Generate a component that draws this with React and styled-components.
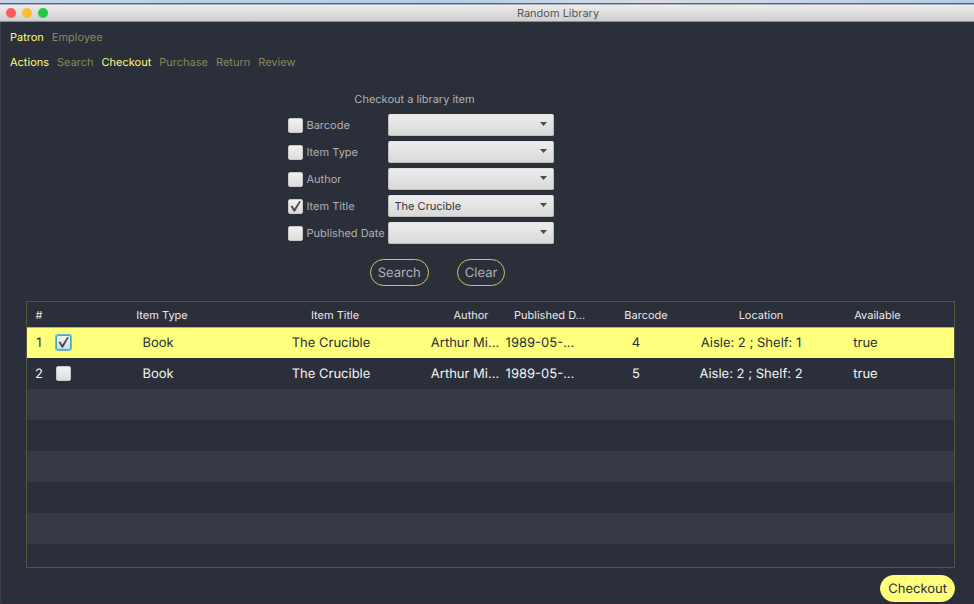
import React, { useState } from "react";
import styled, { createGlobalStyle } from "styled-components";

const GlobalStyle = createGlobalStyle`
  *, *::before, *::after { box-sizing: border-box; }
  body { margin: 0; background: #2b2f3a; text-rendering: geometricPrecision; }
  body, button, select, input { font-family: Inter, "Liberation Sans", sans-serif; }
  button, select { text-rendering: inherit; }
`;

const Window = styled.div`
  min-height: 100vh;
  display: flex;
  flex-direction: column;
  background: #2b2f3a;
  color: #b0b1b4;
  font-size: 11px;
  line-height: 14px;
  border-bottom: 1px solid #35283a;
`;

const Desktop = styled.div`
  height: 4px;
  background: linear-gradient(90deg, #c3d5e9, #b3cde9 45%, #d9dbe6 67%, #b3cbe9);
  border-bottom: 1px solid #566176;
`;

const TitleBar = styled.header`
  height: 18px;
  display: grid;
  grid-template-columns: 1fr auto 1fr;
  align-items: center;
  padding: 0 6px;
  background: linear-gradient(#ececec, #cfcfcf);
  border-top: 1px solid #aeb2ba;
  border-bottom: 1px solid #8c8d92;
`;

const WindowButtons = styled.div`
  display: flex;
  gap: 6px;
`;

const WindowButton = styled.button`
  width: 10px;
  height: 10px;
  padding: 0;
  border: 0;
  border-radius: 50%;
  background: ${(p) => p.$color};
`;

const WindowTitle = styled.h1`
  margin: 0;
  padding-left: 142px;
  font-size: 11px;
  line-height: 14px;
  font-weight: 400;
  color: #555;
`;

const Content = styled.main`
  flex: 1;
  display: flex;
  flex-direction: column;
  border-left: 1px solid #3c3f49;
`;

const Navigation = styled.div`
  display: flex;
  flex-direction: column;
  gap: 11px;
  padding: 8px 9px 0;
`;

const NavRow = styled.nav`
  display: flex;
  gap: 8px;
`;

const NavLink = styled.a`
  color: ${(p) => (p.$active ? "#fcfd7c" : "#848a59")};
  text-decoration: none;
`;

const SearchForm = styled.form`
  display: flex;
  flex-direction: column;
  align-items: center;
  padding: 23px 134px 0 0;
`;

const FormTitle = styled.h2`
  margin: 0 12px 8px 0;
  font-size: 11px;
  line-height: 14px;
  font-weight: 400;
`;

const Fields = styled.div`
  display: flex;
  flex-direction: column;
  gap: 5px;
`;

const FieldRow = styled.div`
  display: grid;
  grid-template-columns: 100px 166px;
  align-items: center;
`;

const FieldLabel = styled.label`
  display: flex;
  align-items: center;
  gap: 4px;
  white-space: nowrap;
`;

const CheckFrame = styled.span`
  position: relative;
  display: block;
  flex: none;
  width: 15px;
  height: 15px;
`;

const CheckInput = styled.input`
  appearance: none;
  display: block;
  width: 15px;
  height: 15px;
  margin: 0;
  border: 1px solid ${(p) => (p.$focused ? "#3ba9cc" : "#c9c9c9")};
  border-radius: 2px;
  background: linear-gradient(#f1f1f1, #dcdcdc);
  box-shadow: ${(p) => (p.$focused ? "0 0 0 1px #68c1dc" : "none")};
`;

const CheckMark = styled.svg`
  position: absolute;
  inset: 0;
  width: 15px;
  height: 15px;
  pointer-events: none;
`;

const SelectFrame = styled.div`
  position: relative;
`;

const Select = styled.select`
  appearance: none;
  display: block;
  width: 100%;
  height: 22px;
  padding: 0 24px 1px 6px;
  border: 1px solid #bdbdbd;
  border-top-color: #e4e4e4;
  border-radius: 2px;
  background: linear-gradient(#ededed, #d9d9d9);
  color: #333;
  font-size: 11px;
`;

const Arrow = styled.svg`
  position: absolute;
  right: 7px;
  top: 8px;
  width: 7px;
  height: 4px;
  fill: #4a4a4a;
  pointer-events: none;
`;

const FormActions = styled.div`
  display: flex;
  gap: 28px;
  margin: 15px 0 15px 34px;
`;

const PillButton = styled.button`
  height: 27px;
  padding: 0 7px;
  border: 1px solid ${(p) => (p.$primary ? "#feff7b" : "#c4c766")};
  border-radius: 14px;
  background: ${(p) => (p.$primary ? "#feff7b" : "transparent")};
  color: ${(p) => (p.$primary ? "#2b2f3a" : "#b0b1b4")};
  font-size: 13px;
  line-height: 16px;
`;

const ResultsPanel = styled.section`
  flex: 1;
  margin: 0 19px 0 25px;
  border: 1px solid #54553a;
  background: repeating-linear-gradient(#2b2f3a 0 31px, #353944 31px 62px) 0 -6px;
  background-size: 100% 620px;
`;

const ResultsTable = styled.table`
  width: 100%;
  table-layout: fixed;
  border-collapse: separate;
  border-spacing: 0;
  white-space: nowrap;
`;

const Column = styled.col`
  width: ${(p) => p.$width}px;
`;

const HeadCell = styled.th`
  height: 25px;
  padding: 0 0 0 ${(p) => p.$inset}px;
  background: #2b2f3a;
  color: #e9e9eb;
  font-size: 11px;
  line-height: 14px;
  font-weight: 400;
`;

const Cell = styled.td`
  height: 31px;
  padding: 0;
  font-size: 13px;
  line-height: 16px;
  text-align: center;
`;

const ResultRow = styled.tr`
  background: ${(p) => (p.$selected ? "#feff7b" : "#2b2f3a")};
  color: ${(p) => (p.$selected ? "#2b2f3a" : "#f4f4f5")};

  ${Cell} {
    box-shadow: ${(p) => (p.$selected ? "inset 0 1px #b5b662, 0 1px #54553a" : "none")};
  }
`;

const CheckCell = styled(Cell)`
  padding-left: 5px;
`;

const Footer = styled.footer`
  display: flex;
  justify-content: flex-end;
  padding: 7px 19px 1px;
`;

function Checkbox({ focused, ...rest }) {
  return (
    <CheckFrame>
      <CheckInput type="checkbox" $focused={focused} {...rest} />
      {rest.checked && (
        <CheckMark viewBox="0 0 15 15" aria-hidden="true">
          <path d="M2.8 7.3 4.3 6.8 6.3 10 11.5 2.1 12.6 2.6 6.9 12.4 5.9 12.4Z" fill="#444" stroke="#444" strokeWidth=".3" />
        </CheckMark>
      )}
    </CheckFrame>
  );
}

const mainTabs = ["Patron", "Employee"];
const subTabs = ["Actions", "Search", "Checkout", "Purchase", "Return", "Review"];
const activeTabs = ["Patron", "Actions", "Checkout"];
const fields = ["Barcode", "Item Type", "Author", "Item Title", "Published Date"];
const columns = [
  { name: "#", width: 24, inset: 0 },
  { name: "", width: 31, inset: 0 },
  { name: "Item Type", width: 152, inset: 8 },
  { name: "Item Title", width: 194, inset: 8 },
  { name: "Author", width: 74, inset: 12 },
  { name: "Published D...", width: 76, inset: 12 },
  { name: "Barcode", width: 116, inset: 20 },
  { name: "Location", width: 114, inset: 20 },
  { name: "Available", width: 115, inset: 24 },
  { name: "", width: 31, inset: 0 },
];
const rows = [
  ["Book", "The Crucible", "Arthur Mi...", "1989-05-...", "4", "Aisle: 2 ; Shelf: 1", "true"],
  ["Book", "The Crucible", "Arthur Mi...", "1989-05-...", "5", "Aisle: 2 ; Shelf: 2", "true"],
];

export default function App() {
  const [enabled, setEnabled] = useState({ "Item Title": true });
  const [selected, setSelected] = useState(0);

  return (
    <>
      <GlobalStyle />
      <Window>
        <Desktop />
        <TitleBar>
          <WindowButtons>
            <WindowButton $color="#fc5b57" aria-label="Close" />
            <WindowButton $color="#fdbc2f" aria-label="Minimize" />
            <WindowButton $color="#28c940" aria-label="Zoom" />
          </WindowButtons>
          <WindowTitle>Random Library</WindowTitle>
        </TitleBar>
        <Content>
          <Navigation>
            {[mainTabs, subTabs].map((tabs) => (
              <NavRow key={tabs[0]} aria-label={tabs[0]}>
                {tabs.map((t) => (
                  <NavLink key={t} href="#" $active={activeTabs.includes(t)}>{t}</NavLink>
                ))}
              </NavRow>
            ))}
          </Navigation>
          <SearchForm onSubmit={(e) => e.preventDefault()}>
            <FormTitle>Checkout a library item</FormTitle>
            <Fields>
              {fields.map((f) => (
                <FieldRow key={f}>
                  <FieldLabel>
                    <Checkbox
                      checked={!!enabled[f]}
                      onChange={(e) => setEnabled({ ...enabled, [f]: e.target.checked })}
                    />
                    {f}
                  </FieldLabel>
                  <SelectFrame>
                    <Select aria-label={f} defaultValue={f === "Item Title" ? "The Crucible" : ""}>
                      <option value="" />
                      {f === "Item Title" && <option>The Crucible</option>}
                    </Select>
                    <Arrow viewBox="0 0 7 4" aria-hidden="true"><path d="M0 0h7L3.5 4z" /></Arrow>
                  </SelectFrame>
                </FieldRow>
              ))}
            </Fields>
            <FormActions>
              <PillButton type="submit">Search</PillButton>
              <PillButton type="reset">Clear</PillButton>
            </FormActions>
          </SearchForm>
          <ResultsPanel>
            <ResultsTable>
              <colgroup>
                {columns.map((c, i) => <Column key={i} $width={c.width} />)}
              </colgroup>
              <thead>
                <tr>
                  {columns.map((c, i) => <HeadCell key={i} $inset={c.inset}>{c.name}</HeadCell>)}
                </tr>
              </thead>
              <tbody>
                {rows.map((r, i) => (
                  <ResultRow key={i} $selected={selected === i}>
                    <Cell>{i + 1}</Cell>
                    <CheckCell>
                      <Checkbox
                        aria-label={`Select item ${i + 1}`}
                        focused={selected === i}
                        checked={selected === i}
                        onChange={(e) => setSelected(e.target.checked ? i : -1)}
                      />
                    </CheckCell>
                    {r.map((v, j) => <Cell key={j}>{v}</Cell>)}
                    <Cell />
                  </ResultRow>
                ))}
              </tbody>
            </ResultsTable>
          </ResultsPanel>
          <Footer>
            <PillButton $primary type="button">Checkout</PillButton>
          </Footer>
        </Content>
      </Window>
    </>
  );
}
